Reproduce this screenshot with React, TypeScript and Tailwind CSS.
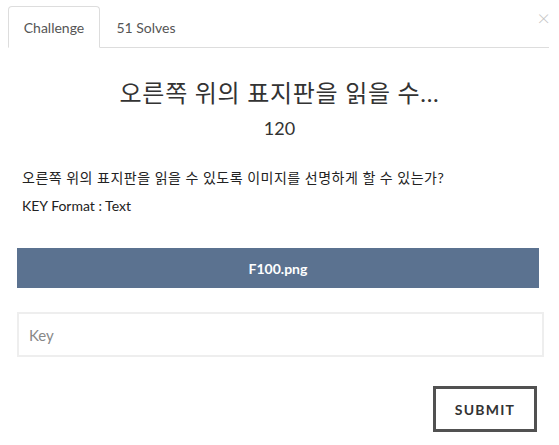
import { useState } from 'react';

const font = { fontFamily: 'Lato, "Noto Sans CJK KR", sans-serif' };

export default function App() {
  const [tab, setTab] = useState<'challenge' | 'solves'>('challenge');
  const [key, setKey] = useState('');

  return (
    <div style={font} className="w-[559px] h-[445px] bg-white text-[#333] relative">
      <button className="absolute right-[9px] top-[7px] text-[22px] leading-none text-[#c4c4c4] font-light">×</button>

      <div className="pt-[6px] pl-[8px] pr-[10px]">
        <div className="flex border-b border-[#dddddd] h-[42px]">
          <button
            onClick={() => setTab('challenge')}
            className={`w-[92px] h-[42px] text-[14px] rounded-t-[4px] ${
              tab === 'challenge' ? 'border border-[#dddddd] border-b-white bg-white -mb-px text-[#555]' : 'text-[#555]'
            }`}
          >
            Challenge
          </button>
          <button
            onClick={() => setTab('solves')}
            className="w-[92px] h-[42px] text-[14px] text-[#555]"
          >
            51 Solves
          </button>
        </div>
      </div>

      <div className="text-center mt-[29px]">
        <h3 className="text-[24px] leading-[32px] tracking-[0.7px] text-[#333]">오른쪽 위의 표지판을 읽을 수...</h3>
        <h4 className="text-[18px] leading-[24px] mt-[7px] text-[#333]">120</h4>
      </div>

      <div className="pl-[22px] mt-[28px] text-[14px] text-[#222]">
        <p className="leading-[20px] tracking-[0.5px]">오른쪽 위의 표지판을 읽을 수 있도록 이미지를 선명하게 할 수 있는가?</p>
        <p className="leading-[20px] mt-[8px]">KEY Format : Text</p>
      </div>

      <div className="ml-[17px] mr-[20px] mt-[32px] h-[40px] bg-[#5b7290] flex items-center justify-center">
        <span className="text-white text-[14px] font-bold">F100.png</span>
      </div>

      <div className="ml-[17px] mr-[15px] mt-[24px]">
        <input
          value={key}
          onChange={(e) => setKey(e.target.value)}
          placeholder="Key"
          className="w-full h-[45px] border-2 border-[#eeeeee] px-[10px] text-[15px] outline-none placeholder:text-[#888]"
        />
      </div>

      <div className="flex justify-end mr-[22px] mt-[29px]">
        <button className="w-[104px] h-[46px] border-[3px] border-[#515151] text-[14px] font-bold tracking-[1.2px] text-[#333]">
          SUBMIT
        </button>
      </div>
    </div>
  );
}
